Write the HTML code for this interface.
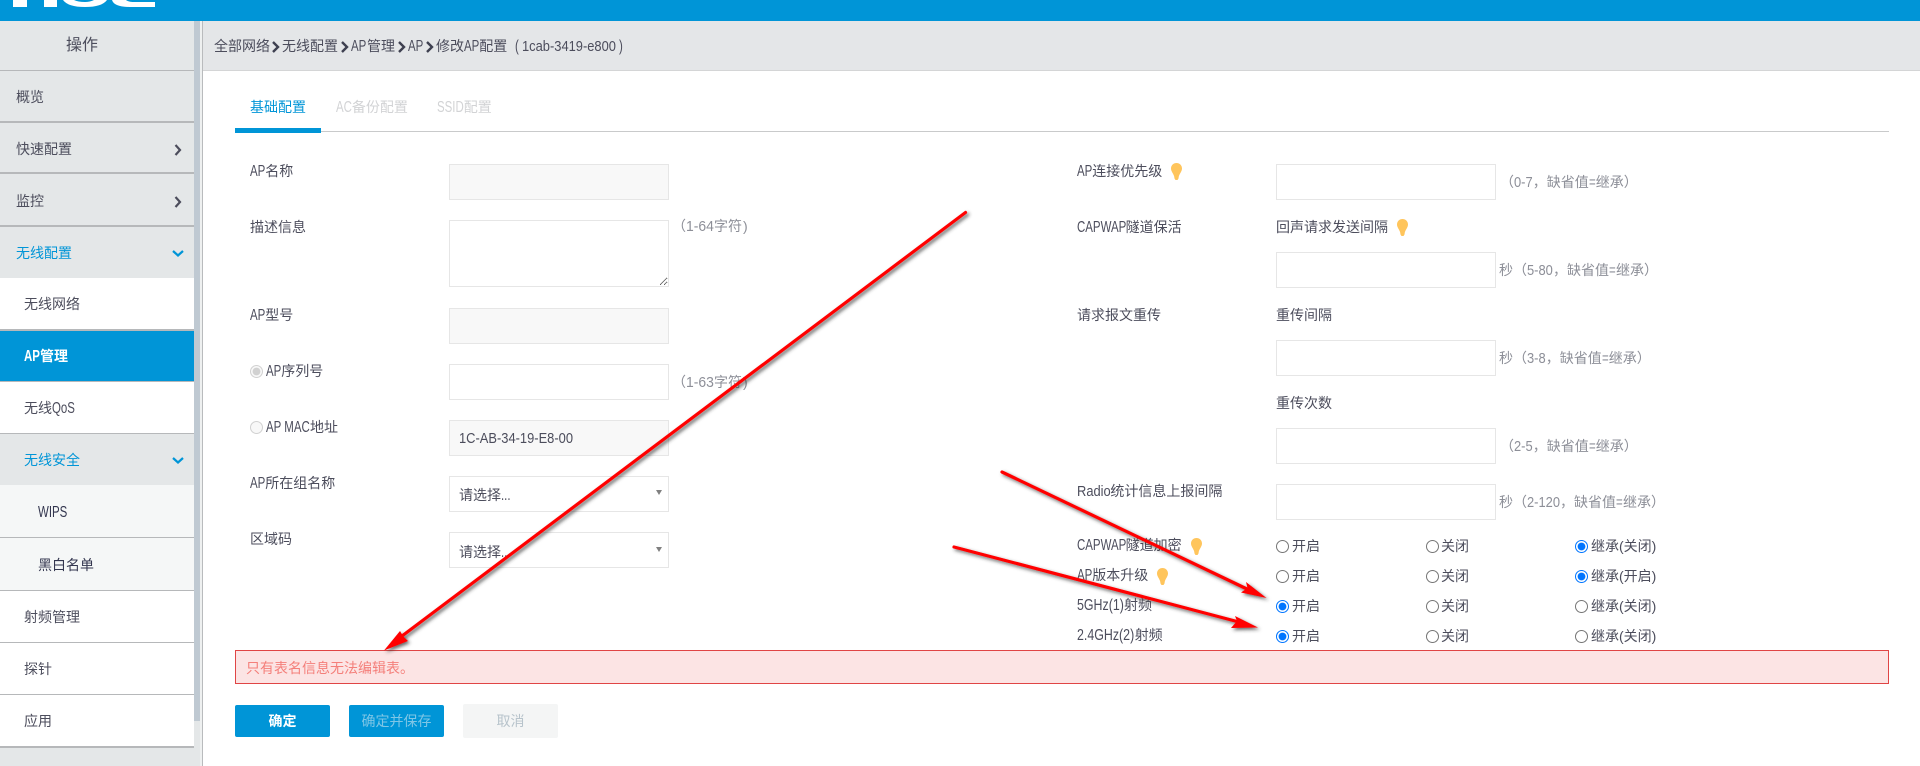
<!DOCTYPE html>
<html lang="zh">
<head>
<meta charset="utf-8">
<title>修改AP配置</title>
<style>
html,body{margin:0;padding:0;width:1920px;height:766px;overflow:hidden;background:#fff}
body{position:relative;font-family:"Liberation Sans","Noto Sans CJK SC",sans-serif;font-size:14px;color:#4c4d5c}
.a{position:absolute}
.t{position:absolute;height:20px;line-height:20px;white-space:nowrap}
.n,.m{display:inline-block;white-space:nowrap;transform-origin:0 50%}
.n{font-size:15.500px;transform:scaleX(.74)}
.m{font-size:15px;transform:scaleX(.86)}
.i{position:absolute;width:218px;height:34px;border:1px solid #e6e6e6;background:#fff}
.d{background:#f8f8f8}
.h{color:#8d8f98}
.s{position:absolute;left:0;width:194px;height:50px;background:#e4e7e8;border-bottom:2px solid #b6b8ba}
.w{background:#fff}
.l{background:#f5f7f7}
input[type=radio]{position:absolute;margin:0;width:13px;height:13px}
.b{position:absolute;width:95px;height:32px;line-height:32px;text-align:center;border-radius:2px}
</style>
</head>
<body>
<!-- header -->
<div class="a" style="left:0;top:0;width:1920px;height:21px;background:#0095d7"></div>
<svg class="a" style="left:0;top:0" width="170" height="10" fill="#fff">
<rect x="13" y="0" width="14" height="7"/><rect x="44" y="0" width="13" height="7"/>
<path d="M63 0Q68 7 85 7Q102 7 107 0L94 0Q90 2 85 2Q78 2 74 0Z"/>
<path d="M112 0Q114 7 130 7L155 7L155 2L135 2Q128 2 126 0Z"/>
</svg>

<!-- sidebar -->
<div class="a" style="left:0;top:21px;width:202px;height:745px;background:#e4e7e8"></div>
<div class="a" style="left:202px;top:21px;width:1px;height:745px;background:#b9bbbd"></div>
<div class="a" style="left:194px;top:21px;width:6px;height:700px;background:#bfc9d2"></div>
<div class="a" style="left:200px;top:21px;width:2px;height:745px;background:#eef0f0"></div>

<div class="s" style="top:21px;height:49px"></div>
<div class="s" style="top:71px"></div>
<div class="s" style="top:123px;height:49px"></div>
<div class="s" style="top:175px;height:50px"></div>
<div class="a" style="left:0;top:227px;width:194px;height:51px;background:#e4e7e8"></div>
<div class="s w" style="top:278px;height:51px"></div>
<div class="a" style="left:0;top:331px;width:194px;height:50px;background:#0095d7"></div>
<div class="s w" style="top:381px;height:51px;border-top:1px solid #b6b8ba"></div>
<div class="a" style="left:0;top:434px;width:194px;height:51px;background:#e4e7e8"></div>
<div class="s l" style="top:485px;height:52px"></div>
<div class="s l" style="top:538px;height:52px"></div>
<div class="s w" style="top:591px;height:51px"></div>
<div class="s w" style="top:643px;height:51px"></div>
<div class="s w" style="top:695px;height:51px"></div>

<div class="t" style="left:66px;top:36px;font-size:16px">操作</div>
<div class="t" style="left:16px;top:87px">概览</div>
<div class="t" style="left:16px;top:139px">快速配置</div>
<div class="t" style="left:16px;top:191px">监控</div>
<div class="t" style="left:16px;top:243px;color:#0095d7">无线配置</div>
<div class="t" style="left:24px;top:294px">无线网络</div>
<div class="t" style="left:24px;top:346px;color:#fff;font-weight:bold"><span class="n" style="width:16px">AP</span>管理</div>
<div class="t" style="left:24px;top:398px">无线<span class="n" style="width:23.800px">QoS</span></div>
<div class="t" style="left:24px;top:450px;color:#0095d7">无线安全</div>
<div class="t" style="left:38px;top:502px;color:#33364f"><span class="n" style="width:29px">WIPS</span></div>
<div class="t" style="left:38px;top:555px;color:#33364f">黑白名单</div>
<div class="t" style="left:24px;top:607px">射频管理</div>
<div class="t" style="left:24px;top:659px">探针</div>
<div class="t" style="left:24px;top:711px">应用</div>

<svg class="a" style="left:170px;top:140px" width="16" height="330" fill="none" stroke-width="2.2">
<path d="M5.500 5L10 10L5.500 15" stroke="#4c4d5c"/>
<path d="M5.500 57L10 62L5.500 67" stroke="#4c4d5c"/>
<path d="M3 111L8 115.500L13 111" stroke="#0095d7"/>
<path d="M3 318L8 322.500L13 318" stroke="#0095d7"/>
</svg>

<!-- breadcrumb -->
<div class="a" style="left:203px;top:21px;width:1717px;height:49px;background:#e4e6e8;border-bottom:1px solid #d4d5d6"></div>
<div class="t" style="left:214px;top:36px">全部网络</div>
<div class="t" style="left:282px;top:36px">无线配置</div>
<div class="t" style="left:351px;top:36px"><span class="n" style="width:16px">AP</span>管理</div>
<div class="t" style="left:408px;top:36px"><span class="n" style="width:15.300px">AP</span></div>
<div class="t" style="left:436px;top:36px">修改<span class="n" style="width:15.300px">AP</span>配置</div>
<div class="t" style="left:515px;top:36px"><span class="n" style="width:7px">(</span><span class="m" style="width:95px">1cab-3419-e800</span><span class="n" style="width:5px;margin-left:2px">)</span></div>
<svg class="a" style="left:270px;top:38px" width="170" height="18" fill="none" stroke="#3e4050" stroke-width="2.4">
<path d="M3 4L8 9L3 14"/><path d="M72 4L77 9L72 14"/><path d="M129 4L134 9L129 14"/><path d="M157 4L162 9L157 14"/>
</svg>

<!-- tabs -->
<div class="a" style="left:235px;top:131px;width:1654px;height:1px;background:#c9cacb"></div>
<div class="a" style="left:235px;top:128px;width:86px;height:5px;background:#0095d7"></div>
<div class="t" style="left:250px;top:97px;color:#0095d7">基础配置</div>
<div class="t" style="left:336px;top:97px;color:#d2d3d5"><span class="n" style="width:15.900px">AC</span>备份配置</div>
<div class="t" style="left:437px;top:97px;color:#d2d3d5"><span class="n" style="width:26.800px">SSID</span>配置</div>

<!-- left form -->
<div class="t" style="left:250px;top:161px"><span class="n" style="width:15.300px">AP</span>名称</div>
<div class="i d" style="left:449px;top:164px"></div>
<div class="t" style="left:250px;top:217px">描述信息</div>
<textarea class="a" style="left:449px;top:220px;width:218px;height:65px;margin:0;padding:0;border:1px solid #e6e6e6;background:#fff;outline:none"></textarea>
<div class="t h" style="left:672px;top:216px">（<span class="m" style="width:28px;transform:scaleX(.93)">1-64</span>字符<span class="a" style="margin-left:1px">)</span></div>
<div class="t" style="left:250px;top:305px"><span class="n" style="width:15.300px">AP</span>型号</div>
<div class="i d" style="left:449px;top:308px"></div>
<input type="radio" name="r0" checked disabled style="left:250px;top:365px">
<div class="t" style="left:266px;top:361px"><span class="n" style="width:15.300px">AP</span>序列号</div>
<div class="i" style="left:449px;top:364px"></div>
<div class="t h" style="left:672px;top:372px">（<span class="m" style="width:28px;transform:scaleX(.93)">1-63</span>字符<span class="a" style="margin-left:1px">)</span></div>
<input type="radio" name="r0" disabled style="left:250px;top:421px">
<div class="t" style="left:266px;top:417px"><span class="n" style="width:44px">AP MAC</span>地址</div>
<div class="i d" style="left:449px;top:420px"></div>
<div class="t" style="left:459px;top:428px"><span class="m" style="width:114px">1C-AB-34-19-E8-00</span></div>
<div class="t" style="left:250px;top:473px"><span class="n" style="width:15.300px">AP</span>所在组名称</div>
<div class="i" style="left:449px;top:476px"></div>
<div class="t" style="left:459px;top:485px">请选择<span class="n" style="width:10px">...</span></div>
<div class="t" style="left:250px;top:529px">区域码</div>
<div class="i" style="left:449px;top:532px"></div>
<div class="t" style="left:459px;top:542px">请选择<span class="n" style="width:10px">...</span></div>
<svg class="a" style="left:655px;top:488px" width="10" height="70" fill="#808080">
<path d="M1 2H7L4 7Z"/><path d="M1 59H7L4 64Z"/>
</svg>

<!-- right form -->
<div class="t" style="left:1077px;top:161px"><span class="n" style="width:15.300px">AP</span>连接优先级</div>
<div class="i" style="left:1276px;top:164px"></div>
<div class="t h" style="left:1500px;top:172px">（<span class="m" style="width:18.800px">0-7</span>，缺省值<span class="n" style="width:7px">=</span>继承）</div>
<div class="t" style="left:1077px;top:217px"><span class="n" style="width:48.600px">CAPWAP</span>隧道保活</div>
<div class="t" style="left:1276px;top:217px">回声请求发送间隔</div>
<div class="i" style="left:1276px;top:252px"></div>
<div class="t h" style="left:1499px;top:260px">秒（<span class="m" style="width:26px">5-80</span>，缺省值<span class="n" style="width:7px">=</span>继承）</div>
<div class="t" style="left:1077px;top:305px">请求报文重传</div>
<div class="t" style="left:1276px;top:305px">重传间隔</div>
<div class="i" style="left:1276px;top:340px"></div>
<div class="t h" style="left:1499px;top:348px">秒（<span class="m" style="width:18.800px">3-8</span>，缺省值<span class="n" style="width:7px">=</span>继承）</div>
<div class="t" style="left:1276px;top:393px">重传次数</div>
<div class="i" style="left:1276px;top:428px"></div>
<div class="t h" style="left:1500px;top:436px">（<span class="m" style="width:18.800px">2-5</span>，缺省值<span class="n" style="width:7px">=</span>继承）</div>
<div class="t" style="left:1077px;top:481px"><span class="m" style="width:33.400px">Radio</span>统计信息上报间隔</div>
<div class="i" style="left:1276px;top:484px"></div>
<div class="t h" style="left:1499px;top:492px">秒（<span class="m" style="width:33px">2-120</span>，缺省值<span class="n" style="width:7px">=</span>继承）</div>

<div class="t" style="left:1077px;top:535px"><span class="n" style="width:48.600px">CAPWAP</span>隧道加密</div>
<div class="t" style="left:1077px;top:565px"><span class="n" style="width:15.300px">AP</span>版本升级</div>
<div class="t" style="left:1077px;top:595px"><span class="n" style="width:47px;transform:scaleX(.8)">5GHz(1)</span>射频</div>
<div class="t" style="left:1077px;top:625px"><span class="n" style="width:57.700px;transform:scaleX(.8)">2.4GHz(2)</span>射频</div>

<input type="radio" name="a" style="left:1276px;top:540px"><div class="t" style="left:1292px;top:536px">开启</div>
<input type="radio" name="a" style="left:1426px;top:540px"><div class="t" style="left:1441px;top:536px">关闭</div>
<input type="radio" name="a" checked style="left:1575px;top:540px"><div class="t" style="left:1591px;top:536px">继承(关闭)</div>
<input type="radio" name="b" style="left:1276px;top:570px"><div class="t" style="left:1292px;top:566px">开启</div>
<input type="radio" name="b" style="left:1426px;top:570px"><div class="t" style="left:1441px;top:566px">关闭</div>
<input type="radio" name="b" checked style="left:1575px;top:570px"><div class="t" style="left:1591px;top:566px">继承(开启)</div>
<input type="radio" name="c" checked style="left:1276px;top:600px"><div class="t" style="left:1292px;top:596px">开启</div>
<input type="radio" name="c" style="left:1426px;top:600px"><div class="t" style="left:1441px;top:596px">关闭</div>
<input type="radio" name="c" style="left:1575px;top:600px"><div class="t" style="left:1591px;top:596px">继承(关闭)</div>
<input type="radio" name="e" checked style="left:1276px;top:630px"><div class="t" style="left:1292px;top:626px">开启</div>
<input type="radio" name="e" style="left:1426px;top:630px"><div class="t" style="left:1441px;top:626px">关闭</div>
<input type="radio" name="e" style="left:1575px;top:630px"><div class="t" style="left:1591px;top:626px">继承(关闭)</div>

<!-- bulbs -->
<svg class="a" style="left:0;top:0" width="1920" height="766" fill="#ffc55c">
<defs><path id="bulb" d="M5.500 0C8.500 0 11 2.300 11 5.500C11 8.500 8.800 10 7.800 13.500L7.500 15.500L6.500 17H4.500L3.500 15.500L3.200 13.500C2.200 10 0 8.500 0 5.500C0 2.300 2.500 0 5.500 0Z"/></defs>
<use href="#bulb" x="1171" y="163"/>
<use href="#bulb" x="1397" y="219"/>
<use href="#bulb" x="1191" y="538"/>
<use href="#bulb" x="1157" y="568"/>
</svg>

<!-- error -->
<div class="a" style="left:235px;top:650px;width:1652px;height:32px;background:#fce4e4;border:1px solid #e04545"></div>
<div class="t" style="left:246px;top:658px;color:#f47f7a">只有表名信息无法编辑表。</div>

<!-- buttons -->
<div class="b" style="left:235px;top:705px;background:#0095d7;color:#fff;font-weight:bold">确定</div>
<div class="b" style="left:349px;top:705px;background:#0095d7;color:#7fc6e6">确定并保存</div>
<div class="b" style="left:463px;top:704px;height:34px;line-height:34px;background:#f4f5f5;color:#b7c3cb">取消</div>

<!-- arrows -->
<svg class="a" style="left:0;top:0" width="1920" height="766">
<defs><filter id="sh" x="-5%" y="-5%" width="110%" height="110%"><feDropShadow dx="2" dy="2" stdDeviation="1.800" flood-color="#333" flood-opacity=".75"/></filter></defs>
<g fill="#f00" stroke="#f00" filter="url(#sh)">
<path d="M965.500 212.500L402 636" stroke-width="3.200" fill="none" stroke-linecap="round"/>
<path d="M384 650.500L400 631L403 636L408 641Z" stroke="none"/>
<path d="M1002 472L1248 589.500" stroke-width="3.200" fill="none" stroke-linecap="round"/>
<path d="M1266.500 598L1246 582L1247.500 588L1241 592.500Z" stroke="none"/>
<path d="M954 547L1237 621.500" stroke-width="3.200" fill="none" stroke-linecap="round"/>
<path d="M1258 627.500L1235 616L1237 621L1231 628Z" stroke="none"/>
</g>
</svg>
</body>
</html>
